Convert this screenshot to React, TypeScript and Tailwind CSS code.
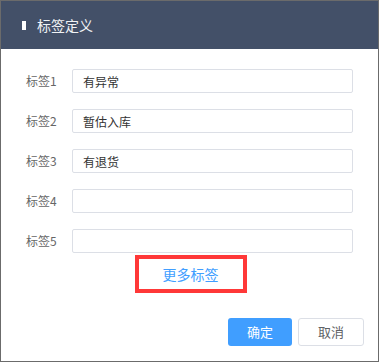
import { useState } from "react";

const initialTags = ["有异常", "暂估入库", "有退货", "", ""];

export default function App() {
  const [tags, setTags] = useState(initialTags);

  return (
    <div
      className="w-[379px] h-[362px] border border-[#6b6b6b] bg-white flex flex-col"
      style={{ fontFamily: '"Noto Sans CJK SC", "Noto Sans", sans-serif' }}
    >
      <div className="h-[48px] shrink-0 bg-[#435068] flex items-center pl-[21px]">
        <span className="w-[4px] h-[9px] bg-white" />
        <span className="ml-[11px] text-[14px] text-[#f0f2f5]">标签定义</span>
      </div>

      <div className="flex flex-col gap-[16px] pt-[20px] pl-[25px] pr-[25px]">
        {tags.map((value, i) => (
          <div key={i} className="flex items-center h-[24px]">
            <label className="w-[46px] text-[12px] text-[#666]">标签{i + 1}</label>
            <input
              value={value}
              onChange={(e) => {
                const next = [...tags];
                next[i] = e.target.value;
                setTags(next);
              }}
              className="w-[281px] h-[24px] border border-[#dcdfe6] rounded-[2px] px-[10px] text-[12px] text-[#333] outline-none"
            />
          </div>
        ))}
      </div>

      <div className="flex justify-center pt-[2px] pl-[2px]">
        <button className="w-[112px] h-[38px] border-[4px] border-[#ff3838] text-[14px] text-[#409eff]">
          更多标签
        </button>
      </div>

      <div className="flex justify-end gap-[6px] mt-auto pr-[14px] pb-[15px]">
        <button className="w-[64px] h-[28px] rounded-[3px] bg-[#409eff] text-white text-[13px]">确定</button>
        <button className="w-[66px] h-[28px] rounded-[3px] border border-[#dcdfe6] bg-white text-[#606266] text-[13px]">
          取消
        </button>
      </div>
    </div>
  );
}
